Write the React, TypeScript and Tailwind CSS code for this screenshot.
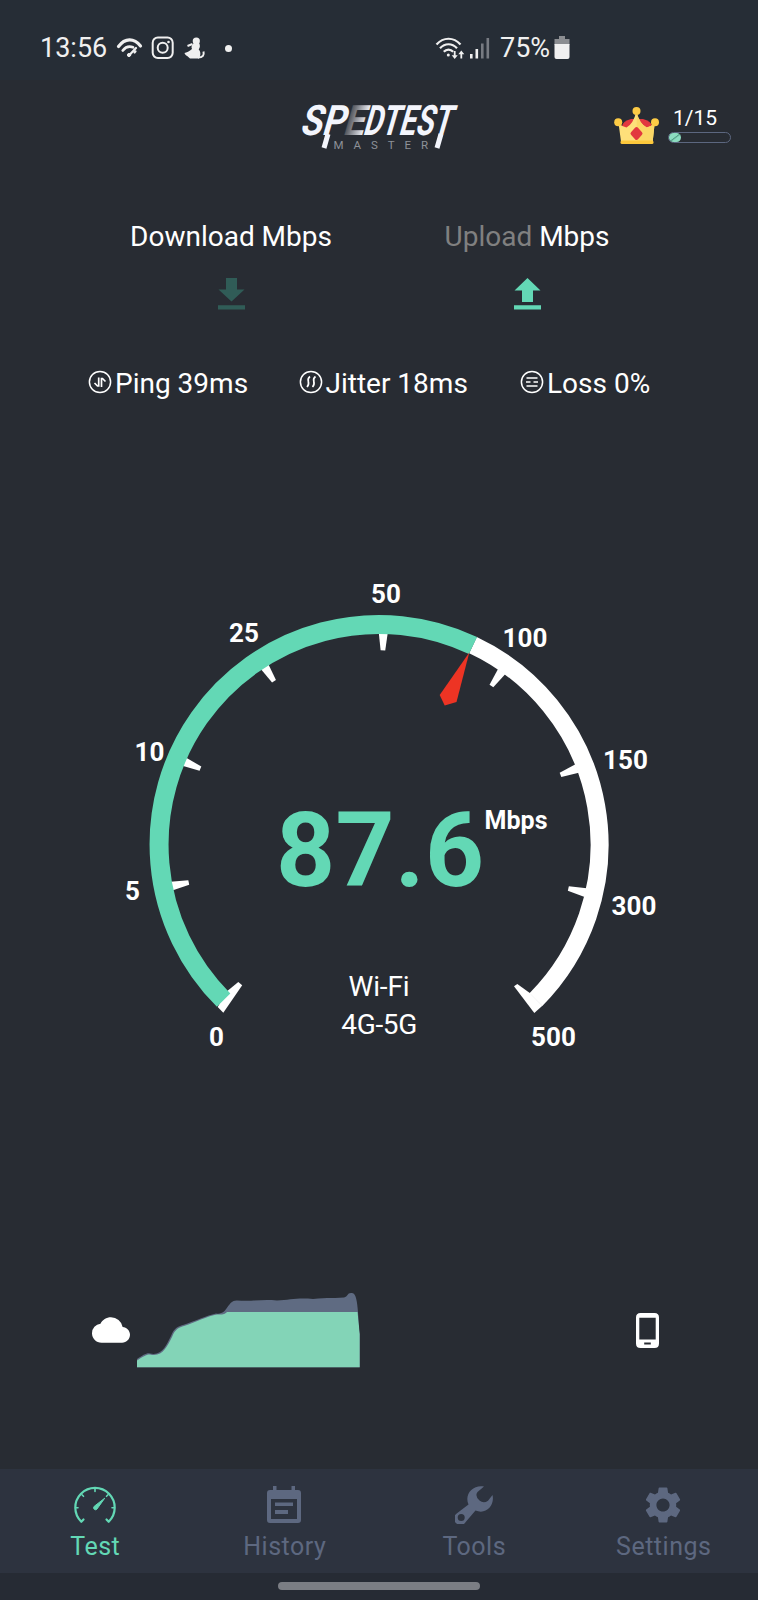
import type { ReactNode } from 'react'
import { MdCloud, MdSettings } from 'react-icons/md'

const TICKS = [
  { label: '0', x: 216.5, y: 1046, angle: -135 },
  { label: '5', x: 132.5, y: 900, angle: -101.3 },
  { label: '10', x: 149.5, y: 761, angle: -67 },
  { label: '25', x: 244, y: 642, angle: -32.8 },
  { label: '50', x: 386, y: 603, angle: 1.1 },
  { label: '100', x: 525, y: 647, angle: 35.3 },
  { label: '150', x: 625.5, y: 769, angle: 69 },
  { label: '300', x: 634, y: 915, angle: 103.1 },
  { label: '500', x: 553.5, y: 1046, angle: 135 },
]

function StatusBar() {
  return (
    <div className="flex h-20 shrink-0 items-center bg-[#262d36] pt-4 pl-10 text-[27px] text-[#f0f0f0]">
      <span className="w-[67px]">13:56</span>
      {/* Speed notification */}
      <svg className="ml-[9px]" width="27" height="22" viewBox="0 0 27 22" fill="none" stroke="#f0f0f0" strokeLinecap="round">
        <path d="M2.5 9.5C9 .8 18 .8 24.5 9" strokeWidth="3.2" />
        <path d="M6.8 13.5C9.5 10 13.5 9 17 10.3" strokeWidth="2.8" />
        <path d="M13 18.5L20 11" strokeWidth="2.2" />
        <circle cx="13" cy="18" r="1.6" fill="#f0f0f0" />
        <path d="M18.5 15.5l1-1.2" strokeWidth="2.2" />
      </svg>
      {/* Instagram */}
      <svg className="ml-2" width="24" height="24" viewBox="0 0 24 24" fill="none" stroke="#f0f0f0" strokeWidth="2">
        <rect x="1.7" y="1.5" width="20" height="20.5" rx="5.2" />
        <circle cx="11.7" cy="11.8" r="5" />
        <circle cx="17.5" cy="6" r="1.3" fill="#f0f0f0" stroke="none" />
      </svg>
      {/* Figure */}
      <svg className="ml-[9px]" width="22" height="23" viewBox="0 0 22 23" fill="#f0f0f0">
        <circle cx="12.3" cy="4" r="3.6" />
        <path d="M10 6h5c1.5 2.5 1 4.5-.3 6.5 2 2 2.3 5.5.3 9H6C4 19 1 18.5.5 16c2-.5 5-1.5 7.5-4-1-2-.5-4 2-6z" />
        <path d="M14 20.5c5 0 6.3-2.5 5.5-6M3.5 9l5-2" fill="none" stroke="#f0f0f0" strokeWidth="2" />
      </svg>
      <span className="ml-[19px] h-[7px] w-[7px] rounded-full bg-[#f0f0f0]" />
      {/* Wi-Fi with traffic arrows */}
      <svg className="ml-[203px]" width="31" height="25" viewBox="0 0 31 25" fill="none" stroke="#f0f0f0" strokeWidth="2.2">
        <path d="M1.5 8.5C8.5.8 18.5.8 25.5 8.5M5 12.2c5-5.3 12-5.3 17 0M8.8 15.8c2.7-3 6.7-3 9.4 0" />
        <circle cx="13.3" cy="19" r="1.5" fill="#f0f0f0" stroke="none" />
        <path d="M19.7 15v5.5M26.3 22.5v-5" strokeWidth="1.8" />
        <path d="M16.7 19.3h6l-3 3.7zM23.3 18.2h6l-3-3.7z" fill="#f0f0f0" stroke="none" />
      </svg>
      <svg className="ml-1" width="20" height="22" viewBox="0 0 20 22" fill="#f0f0f0">
        <rect x="0" y="17" width="2.6" height="4.5" />
        <rect x="5.5" y="12" width="2.6" height="9.5" />
        <rect x="11" y="6.5" width="2.6" height="15" fill="#777b82" />
        <rect x="16.5" y="1" width="2.6" height="20.5" fill="#777b82" />
      </svg>
      <span className="ml-[10px] w-[51px]">75%</span>
      <svg className="ml-[3px]" width="16" height="24" viewBox="0 0 16 24">
        <path d="M5 0h6v3h4.5v6H.5V3H5z" fill="#8b8d91" />
        <path d="M.5 8h15v13q0 2-2 2h-11q-2 0-2-2z" fill="#f0f0f0" />
      </svg>
    </div>
  )
}

function Logo() {
  return (
    <svg className="overflow-visible" width="160" height="50" viewBox="300 103 160 50">
      <defs>
        <linearGradient id="fade">
          <stop offset="0" stopColor="#f3f5fc" stopOpacity=".1" />
          <stop offset="1" stopColor="#f3f5fc" />
        </linearGradient>
      </defs>
      <g transform="translate(300 135) skewX(-16)" fill="#f3f5fc" fontFamily="Roboto, sans-serif" fontSize="42" fontWeight="700">
        <text x="-1" textLength="45" lengthAdjust="spacingAndGlyphs">SP</text>
        <text x="42" textLength="21" lengthAdjust="spacingAndGlyphs" fill="url(#fade)">E</text>
        <text x="62" textLength="88" lengthAdjust="spacingAndGlyphs">DTEST</text>
      </g>
      {/* Slashes running below the wordmark */}
      <path d="M328 134L324 148M441 134L437 148" stroke="#f3f5fc" strokeWidth="5" />
      <text x="333.5" y="148.5" textLength="94.5" fill="#8d9198" fontFamily="Roboto, sans-serif" fontSize="11.5">MASTER</text>
    </svg>
  )
}

function Crown() {
  return (
    <svg width="46" height="38" viewBox="0 0 46 38">
      <path d="M8 19q1-5 9-7h12q8 2 9 7v10H8z" fill="#e2383f" />
      <path d="M4.5 16q4 4 8 4.5 7-4 9.7-15.5 3 12 10.5 15.5 4-.5 8-4.5l-2 18.5H7z" fill="#fee07a" />
      <path d="M22.7 5q3 12 10 15.5 4-.5 8-4.5l-2 18.5h-16z" fill="#fbd766" />
      <rect x="6.5" y="33.5" width="33" height="3.5" rx="1.5" fill="#fdc83c" />
      <circle cx="22.5" cy="4" r="4" fill="#fdcb45" />
      <circle cx="4.2" cy="15.3" r="4" fill="#fdcb45" />
      <circle cx="41" cy="15.3" r="4" fill="#fdcb45" />
      <path d="M22.5 22l4 4.5-4 4.5-4-4.5z" fill="#e2383f" stroke="#e2383f" strokeWidth="4" strokeLinejoin="round" />
    </svg>
  )
}

function Header() {
  return (
    <div className="flex items-start pt-[23px]">
      <div className="ml-[300px]">
        <Logo />
      </div>
      <div className="mt-1 ml-[154px]">
        <Crown />
      </div>
      <div className="ml-[7.5px] flex w-[63px] flex-col items-center">
        <span className="mt-[3px] pr-[8px] text-[21px] leading-6 text-white">1/15</span>
        <div className="mt-[2px] h-[11px] w-full rounded-full border-[1.5px] border-[#5c6780]">
          <div className="h-full w-[12px] rounded-full bg-linear-to-br from-[#8cdcc0] from-45% via-[#4f9c83] via-50% to-[#8cdcc0] to-60%" />
        </div>
      </div>
    </div>
  )
}

function Stat({ children, text, className }: { children: ReactNode; text: string; className: string }) {
  return (
    <div className={`flex items-center gap-[3px] ${className}`}>
      <svg className="-mt-1 shrink-0" width="24" height="24" viewBox="0 0 24 24" fill="none" stroke="#fff" strokeWidth="1.5">
        <circle cx="12" cy="12" r="10.6" />
        {children}
      </svg>
      <span className="whitespace-nowrap">{text}</span>
    </div>
  )
}

function Gauge() {
  return (
    <svg className="mt-[165px] block shrink-0" width="758" height="490" viewBox="0 570 758 490" fontFamily="Roboto, sans-serif" fill="#fff">
      {/* Remaining range */}
      <path d="M473 645.1A220.5 220.5 0 0 1 535.9 999.6" fill="none" stroke="#fff" strokeWidth="18" />
      {/* Tick marks taper towards the centre */}
      {TICKS.slice(1, -1).map((t) => (
        <path key={t.label} d="M-4.5-212H4.5L2.3-194.2H-2.3Z" transform={`translate(379.2 844.5) rotate(${t.angle})`} />
      ))}
      <path d="M223.3 1012.7L217.7 1007L227 991.3L238.3 982L242.2 985.3z" />
      <path d="M542.4 1005.8L534.3 1012.9L514 986.3L517.3 984L529.8 993z" />
      {/* Measured speed */}
      <path d="M223.6 1000.1A220 220 0 0 1 473 645.5" fill="none" stroke="#63d8b5" strokeWidth="19" />
      <path d="M469.3 652.5L439.7 695L444.7 705.5L456.5 702z" fill="#ed3424" />
      <g fontSize="26" fontWeight="700" textAnchor="middle">
        {TICKS.map((t) => (
          <text key={t.label} x={t.x} y={t.y}>{t.label}</text>
        ))}
      </g>
      <text x="276" y="886.3" fontSize="103" fontWeight="700" textLength="208" fill="#63d8b5">87.6</text>
      <text x="484.5" y="829" fontSize="25" fontWeight="700" textLength="63">Mbps</text>
      <g fontSize="28" textAnchor="middle">
        <text x="379" y="995.7" textLength="61">Wi-Fi</text>
        <text x="379.3" y="1033.5" textLength="76">4G-5G</text>
      </g>
    </svg>
  )
}

function TrafficChart() {
  return (
    <div className="mt-[230px] flex h-[80px]">
      <MdCloud className="mt-[21px] ml-[91.5px] h-[38px] w-[38px] shrink-0 text-white" />
      <svg className="ml-[6px] shrink-0" width="226" height="80" viewBox="136 1290 226 80">
        <defs>
          <clipPath id="area">
            <path d="M137 1359C143 1355 147 1352.5 150 1353.5C162 1356 166 1346 171 1336C174 1328 178 1326.5 183 1325C195 1321 207 1315.5 216 1313.5C228 1315.5 227 1300 237 1300.5C255 1301.5 262 1299 277 1300.5C290 1300 297 1297.5 313 1299C328 1297 335 1298.5 344 1297.5C348 1296.5 347 1293 351 1293C358 1291.5 357.5 1309 359.8 1334V1367.2H137z" />
          </clipPath>
        </defs>
        <g clipPath="url(#area)">
          <rect x="137" y="1290" width="224" height="78" fill="#5f6b82" />
          <path d="M137 1360.5C143 1356.5 147 1354 150 1354.5C162 1357.5 167 1347 172 1337C175 1329 179 1327.5 184 1326C196 1322 208 1316 217 1314.5Q225 1315 227 1312H357.5L359.8 1334V1368H137z" fill="#83d4b7" />
        </g>
      </svg>
      <svg className="mt-[23px] ml-[274.5px] shrink-0" width="23" height="35" viewBox="0 0 23 35">
        <path d="M4.5 0h14Q23 0 23 4.5v26Q23 35 18.5 35h-14Q0 35 0 30.5v-26Q0 0 4.5 0zM3.3 4.8v21.7h16.4V4.8zM8.2 29.5v2h6.6v-2z" fill="#fff" fillRule="evenodd" />
      </svg>
    </div>
  )
}

function TestIcon() {
  return (
    <svg width="44" height="38" viewBox="0 0 44 38" fill="none" stroke="#63d8b5" strokeWidth="2.2" strokeLinecap="round" strokeLinejoin="round">
      <path d="M10.5 33.5L8.3 35.8A19.7 19.7 0 1 1 35.7 35.8L33.5 33.5" />
      <path d="M22 3v2.5M3 21.8h2M39 21.8h2M9 8.8l1.5 1.5M35 8.8l-1.5 1.5" strokeWidth="1.6" />
      <path d="M31.5 12.5L24 23a1.8 1.8 0 1 1-3-2.4z" fill="#63d8b5" strokeWidth="1" />
    </svg>
  )
}

function HistoryIcon() {
  return (
    <svg width="34" height="38" viewBox="0 0 34 38">
      <path d="M3 4h3V0h3.5v4h15V0H28v4h3q3 0 3 3v27q0 3-3 3H3q-3 0-3-3V7q0-3 3-3zM4 13v20h26V13zM8 16.5h18V20H8zM8 24h13v4H8z" fill="currentColor" fillRule="evenodd" />
    </svg>
  )
}

function WrenchIcon() {
  return (
    <svg width="38" height="38" viewBox="0 0 38 38">
      <path
        d="M29 .5C18-1.5 9 8 13.5 18.5L2 27.3A6.3 6.3 0 1 0 10.7 36L20.5 24.5C31 29 40 19.5 37.5 9L33 14.8Q28.5 18 24.5 14.5Q19.5 10 22.5 6zM6.2 28a3.5 3.5 0 1 1 0 7a3.5 3.5 0 1 1 0-7z"
        fill="currentColor"
        fillRule="evenodd"
      />
    </svg>
  )
}

function NavItem({ icon, label, active }: { icon: ReactNode; label: string; active?: boolean }) {
  return (
    <div className={`flex flex-1 flex-col items-center ${active ? 'text-[#63d8b5]' : 'text-[#5d6880]'}`}>
      <div className="mt-[15px] flex h-[42px] items-center justify-center">{icon}</div>
      <span className="mt-1 pl-px text-[25px] leading-[34px] tracking-[0.5px]">{label}</span>
    </div>
  )
}

export default function App() {
  return (
    <div className="flex h-[1600px] w-[758px] flex-col overflow-hidden bg-[#282c33] font-[Roboto,sans-serif]">
      <StatusBar />
      <Header />

      {/* Download / upload */}
      <div className="mt-[63px] flex px-[83px] text-[28px] leading-[42px] text-white">
        <div className="flex w-[296px] flex-col items-center">
          <span className="whitespace-nowrap">Download Mbps</span>
          <svg className="mt-[20px]" width="27" height="32" viewBox="0 0 27 32" fill="#305c57">
            <path d="M8 0h11v11.5h7.5L13.5 23.5.5 11.5H8zM0 27.2h27v4.3H0z" />
          </svg>
        </div>
        <div className="flex w-[296px] flex-col items-center">
          <span className="whitespace-nowrap"><span className="text-[#808080]">Upload</span> Mbps</span>
          <svg className="mt-[20px]" width="27" height="32" viewBox="0 0 27 32" fill="#63d8b5">
            <path d="M13.5 0l13 12.5H19V24H8V12.5H.5zM0 27.2h27v4.3H0z" />
          </svg>
        </div>
      </div>

      {/* Connection quality */}
      <div className="mt-[53px] flex pl-[88px] text-[28px] leading-[42px] text-white">
        <Stat text="Ping 39ms" className="w-[210.5px]">
          <path d="M10.7 7.5v8.5H9.5L6.5 13M13.5 17V8.5h1l3 3" strokeWidth="1.7" />
        </Stat>
        <Stat text="Jitter 18ms" className="w-[221.5px]">
          <path d="M11 6.5c-5 3.5 1.5 6-3 10.5M16.5 6.5c-5 3.5 1.5 6-3 10.5" strokeWidth="1.7" />
        </Stat>
        <Stat text="Loss 0%" className="w-[140px]">
          <path d="M6.5 8h11M6 12h4.5M13.5 12H18M6.5 16h11" strokeWidth="1.7" />
        </Stat>
      </div>

      <Gauge />
      <TrafficChart />

      <div className="mt-auto flex h-[104px] shrink-0 bg-[#2d333f]">
        <NavItem icon={<TestIcon />} label="Test" active />
        <NavItem icon={<HistoryIcon />} label="History" />
        <NavItem icon={<WrenchIcon />} label="Tools" />
        <NavItem icon={<MdSettings className="h-[44px] w-[44px]" />} label="Settings" />
      </div>
      <div className="flex h-[27px] shrink-0 justify-center bg-[#262b34] pt-[9px]">
        <div className="h-2 w-[202px] rounded-full bg-[#7b7e84]" />
      </div>
    </div>
  )
}
